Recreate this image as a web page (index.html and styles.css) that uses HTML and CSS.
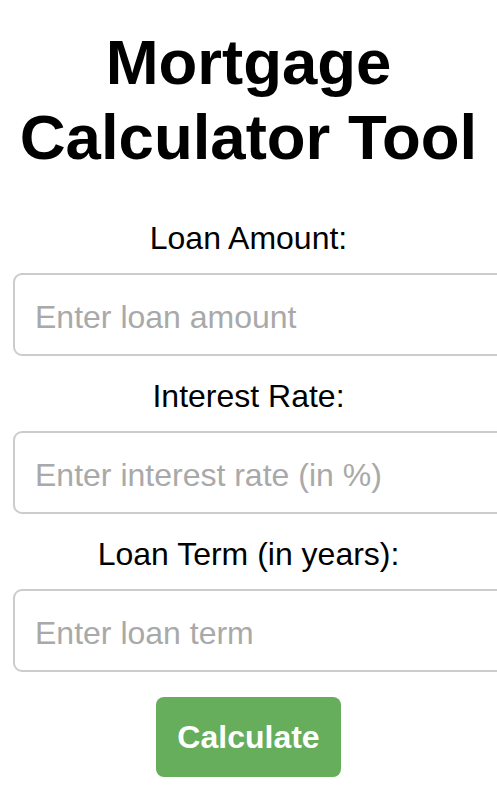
FILE: index.html
```html
<!DOCTYPE html>
<html lang="en">
<head>
  <meta charset="UTF-8">
  <meta name="viewport" content="width=device-width, initial-scale=1.0">
  <title>Mortgage Calculator Tool</title>
  <link rel="stylesheet" href="styles.css">
</head>
<body>
  <h1>Mortgage Calculator Tool</h1>

  <form class="calc-form">
    <label for="amount">Loan Amount:</label>
    <input type="number" id="amount" placeholder="Enter loan amount">

    <label for="rate">Interest Rate:</label>
    <input type="number" id="rate" placeholder="Enter interest rate (in %)">

    <label for="term">Loan Term (in years):</label>
    <input type="number" id="term" placeholder="Enter loan term">

    <button type="button">Calculate</button>
  </form>
</body>
</html>
```

FILE: styles.css
```css
html, body {
  overflow-x: hidden;
}
body {
  margin: 0;
  font-family: "Liberation Sans", Arial, sans-serif;
  color: #000;
  background: #fff;
  text-align: center;
}
h1 {
  font-size: 63.5px;
  line-height: 75px;
  font-weight: bold;
  margin: 25px 0 45px;
}
.calc-form {
  padding: 0 13px;
}
.calc-form label {
  display: block;
  font-size: 32px;
  line-height: 36px;
  margin-bottom: 17px;
}
.calc-form input {
  display: block;
  width: 100%;
  height: 74px;
  padding: 5px 20px 0;
  margin: 0 0 22px;
  border: 2px solid #ccc;
  border-radius: 9px;
  font-family: "Liberation Sans", Arial, sans-serif;
  font-size: 32px;
  color: #333;
  background: #fff;
  outline: none;
}
.calc-form input::placeholder {
  color: #a9a9a9;
}
.calc-form button {
  margin-top: 3px;
  height: 80px;
  padding: 0 21px;
  background: #66ad5c;
  color: #fff;
  border: none;
  border-radius: 8px;
  font-family: "Liberation Sans", Arial, sans-serif;
  font-size: 32px;
  font-weight: bold;
  cursor: pointer;
}
```
